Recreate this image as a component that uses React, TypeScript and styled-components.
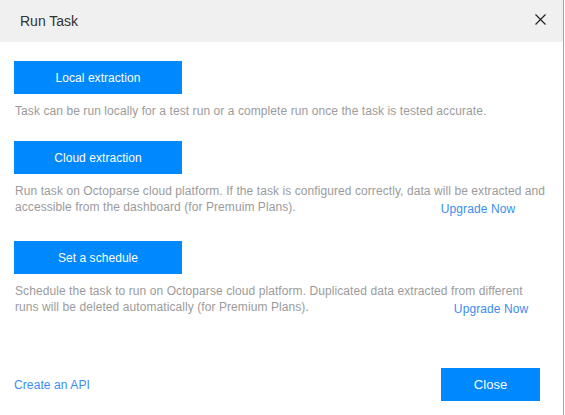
import React from 'react';
import styled, { createGlobalStyle } from 'styled-components';

const GlobalStyle = createGlobalStyle`
    html, body {
        margin: 0;
        padding: 0;
        background: #ffffff;
        font-family: "Liberation Sans", Arial, sans-serif;
    }
`;

const Dialog = styled.div`
    width: 564px;
    height: 415px;
    box-sizing: border-box;
    border-right: 1px solid #a3a3a3;
    background: #ffffff;
    display: flex;
    flex-direction: column;
`;

const Header = styled.div`
    height: 42px;
    flex-shrink: 0;
    background: #f0f0f0;
    display: flex;
    align-items: center;
    justify-content: space-between;
    padding: 0 17px 0 20px;
`;

const Title = styled.span`
    font-size: 14px;
    color: #333333;
    margin-top: -1px;
`;

const CloseIcon = styled.button`
    width: 12px;
    height: 12px;
    padding: 0;
    border: none;
    background: none;
    display: flex;
    align-items: center;
    justify-content: center;
    cursor: pointer;
    margin-top: -3px;
`;

const Body = styled.div`
    padding-top: 19px;
`;

const Section = styled.div<{ $top: number }>`
    margin-top: ${p => p.$top}px;
    display: flex;
    flex-direction: column;
    align-items: flex-start;
`;

const PrimaryButton = styled.button<{ $width: number }>`
    width: ${p => p.$width}px;
    height: 33px;
    border: none;
    background: #0088fe;
    color: #ffffff;
    font-family: "Liberation Sans", Arial, sans-serif;
    font-size: 12px;
    letter-spacing: 0.05px;
    cursor: pointer;
    padding: 0;
`;

const ActionButton = styled(PrimaryButton)`
    margin-left: 14px;
`;

const Desc = styled.p`
    margin: 9px 0 0 15px;
    width: 548px;
    font-size: 12px;
    line-height: 16px;
    letter-spacing: 0.08px;
    color: #9b9b9b;
`;

const Link = styled.a<{ $size?: number }>`
    color: #3b8df2;
    font-size: ${p => p.$size ?? 12}px;
    letter-spacing: 0.1px;
    text-decoration: none;
    cursor: pointer;
`;

const UpgradeLink = styled(Link)`
    margin-left: 145px;
    vertical-align: -2px;
`;

const Footer = styled.div`
    margin-top: auto;
    display: flex;
    align-items: center;
    justify-content: space-between;
    padding: 0 23px 14px 14px;
`;

const CloseButton = styled(PrimaryButton)`
    font-size: 13px;
`;

const sections = [
    {
        label: 'Local extraction',
        top: 0,
        lines: ['Task can be run locally for a test run or a complete run once the task is tested accurate.'],
        upgrade: false,
    },
    {
        label: 'Cloud extraction',
        top: 22,
        lines: [
            'Run task on Octoparse cloud platform. If the task is configured correctly, data will be extracted and',
            'accessible from the dashboard (for Premuim Plans).',
        ],
        upgrade: true,
    },
    {
        label: 'Set a schedule',
        top: 24,
        lines: [
            'Schedule the task to run on Octoparse cloud platform. Duplicated data extracted from different',
            'runs will be deleted automatically (for Premium Plans).',
        ],
        upgrade: true,
    },
];

const App: React.FC = () => {
    return (
        <>
            <GlobalStyle />
            <Dialog>
                <Header>
                    <Title>Run Task</Title>
                    <CloseIcon aria-label="close">
                        <svg width="11" height="11" viewBox="0 0 11 11">
                            <path d="M0.5 0.5 L10.5 10.5 M10.5 0.5 L0.5 10.5" stroke="#222" strokeWidth="1.2" fill="none" />
                        </svg>
                    </CloseIcon>
                </Header>
                <Body>
                    {sections.map(s => (
                        <Section key={s.label} $top={s.top}>
                            <ActionButton $width={168}>{s.label}</ActionButton>
                            <Desc>
                                {s.lines.map((line, i) => (
                                    <React.Fragment key={i}>
                                        {i > 0 && <br />}
                                        {line}
                                    </React.Fragment>
                                ))}
                                {s.upgrade && <UpgradeLink>Upgrade Now</UpgradeLink>}
                            </Desc>
                        </Section>
                    ))}
                </Body>
                <Footer>
                    <Link>Create an API</Link>
                    <CloseButton $width={99}>Close</CloseButton>
                </Footer>
            </Dialog>
        </>
    );
};

export default App;
